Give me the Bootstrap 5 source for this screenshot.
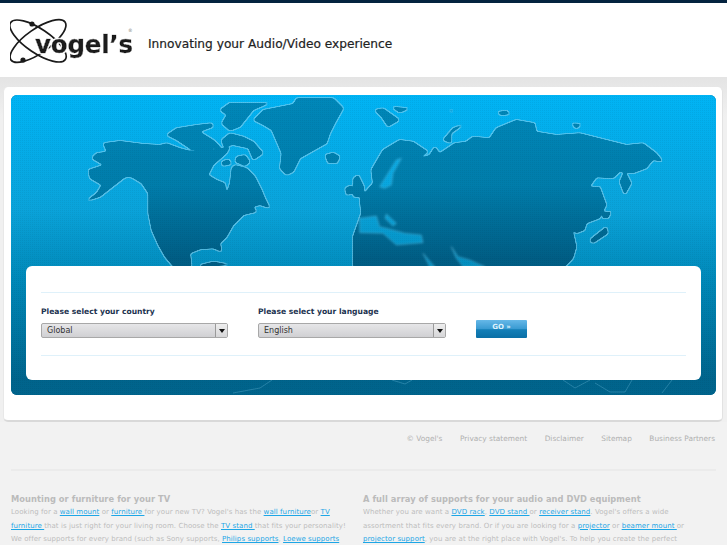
<!DOCTYPE html>
<html lang="en">
<head>
<meta charset="utf-8">
<title>Vogel's</title>
<link href="https://cdn.jsdelivr.net/npm/bootstrap@5.3.0/dist/css/bootstrap.min.css" rel="stylesheet">
<style>
html,body{height:545px;overflow:hidden;background:#f2f2f2;font-family:"DejaVu Sans",sans-serif;}
.topstrip{height:3px;background:#04233f;}
.brandbar{height:74px;background:#fff;padding-left:10px;}
.brandbar svg{display:block;margin-top:3px;}
.tagline{font-size:12.2px;color:#222;margin:9px 0 0 12px;line-height:1;-webkit-text-stroke:.2px #222;}
.band{background:linear-gradient(#e4e4e4,#f0f0f0 40px);padding:10px 4px 0 3px;}
.sheet{background:#fff;border-radius:5px;height:335px;border-bottom:2px solid #d9d9d9;border-right:1px solid #e2e2e2;border-left:1px solid #e8e8e8;padding:8px 6px 0 7px;}
.mappanel{position:relative;height:300px;border-radius:6px;overflow:hidden;background:#00648c;padding:171px 15px 15px;}
.mappanel svg{position:absolute;left:0;top:0;}
.chooser{position:relative;background:#fff;border-radius:6px;height:114px;padding:26px 15px 0;}
.chooser-rule{height:1px;background:#dff1fa;}
.chooser-row{height:62px;padding-top:13px;}
.pick{width:187px;margin-right:30px;}
.pick+.pick{width:188px;}
.pick-label{font-size:7.6px;font-weight:700;color:#1c3350;line-height:11px;margin-bottom:6px;}
.pick-box{height:15px;border:1px solid #a8a8a8;border-radius:2px;background:linear-gradient(#e6e6e8,#d0d0d3);font-size:8px;color:#333;line-height:14px;padding-left:5px;}
.pick-arrow{width:12px;height:100%;border-left:1px solid #9a9a9a;background:linear-gradient(#eee,#d6d6d8);}
.pick-arrow::before{content:"";border-left:3px solid transparent;border-right:3px solid transparent;border-top:4px solid #111;}
.gobtn{width:51px;height:18px;margin:14px 0 0 0;border-radius:1px;background:linear-gradient(#66b8e8 0,#3a9bd2 48%,#147fb8 54%,#0a6fa6 100%);color:#dff2fc;font-size:7px;font-weight:700;line-height:15px;text-align:center;}
.footlinks{padding:12px 12px 0 0;height:47px;font-size:7.4px;line-height:10px;color:#b0b0b0;gap:17.5px;}
.footrule{height:2px;background:#ebebeb;margin:0 11px;}
.seo{padding:21px 0 0 11px;gap:34px;}
.seocol{width:318px;flex:none;font-size:7px;line-height:13.6px;color:#bdbdbd;white-space:nowrap;letter-spacing:.07px;}
.seocol+.seocol{width:340px;}
.seocol h2{font-size:8.3px;font-weight:700;color:#bbb;line-height:14px;margin:0;letter-spacing:.06px;}
.seocol a{color:#1da6e6;}
</style>
</head>
<body>
<div class="topstrip"></div>
<div class="brandbar d-flex align-items-center">
<svg width="126" height="52" viewBox="10 16 126 52" role="img" aria-label="Vogel's logo">
<defs>
<filter id="halo" x="-5%" y="-20%" width="110%" height="140%">
<feMorphology in="SourceAlpha" operator="dilate" radius="1.3" result="d"/>
<feFlood flood-color="#fff"/><feComposite in2="d" operator="in" result="w"/>
<feMerge><feMergeNode in="w"/><feMergeNode in="SourceGraphic"/></feMerge>
</filter>
</defs>
<g fill="none" stroke="#1a1a1a" stroke-width="1.7">
<ellipse cx="38" cy="41" rx="33" ry="12" transform="rotate(34 38 41)"/>
<ellipse cx="38" cy="41" rx="33" ry="12" transform="rotate(-35 38 41)"/>
</g>
<circle cx="32" cy="24" r="2.6" fill="#1a1a1a"/><circle cx="23" cy="60" r="2.6" fill="#1a1a1a"/>
<text x="35" y="53" font-family="DejaVu Sans" font-weight="700" font-size="24.5" letter-spacing="-.2" fill="#1a1a1a" stroke="#1a1a1a" stroke-width=".4" filter="url(#halo)">vogel’s</text>
<text x="128" y="32" font-family="DejaVu Sans" font-size="4.5" fill="#777">®</text>
</svg>
<div class="tagline">Innovating your Audio/Video experience</div>
</div>
<div class="band">
<div class="sheet">
<div class="mappanel">
<svg width="705" height="300" viewBox="11 95 705 300" aria-hidden="true">
<defs>
<linearGradient id="sea" gradientUnits="userSpaceOnUse" x1="0" y1="95" x2="0" y2="395"><stop offset="0" stop-color="#00b4f5"/><stop offset=".38" stop-color="#0aa3da"/><stop offset=".62" stop-color="#0088b8"/><stop offset=".95" stop-color="#00648c"/></linearGradient>
<linearGradient id="seaz" gradientUnits="userSpaceOnUse" x1="0" y1="15" x2="0" y2="915"><stop offset="0" stop-color="#00b4f5"/><stop offset=".38" stop-color="#0aa3da"/><stop offset=".62" stop-color="#0088b8"/><stop offset=".95" stop-color="#00648c"/></linearGradient>
<linearGradient id="landz" gradientUnits="userSpaceOnUse" x1="0" y1="15" x2="0" y2="915"><stop offset="0" stop-color="#0088ba"/><stop offset=".3" stop-color="#007dab"/><stop offset=".55" stop-color="#005d84"/><stop offset="1" stop-color="#00648c"/></linearGradient>
<pattern id="mesh" width="2" height="2" patternUnits="userSpaceOnUse"><rect width="1" height="1" fill="#000" opacity=".05"/></pattern>
<filter id="rounded" filterUnits="userSpaceOnUse" x="11" y="95" width="705" height="300" color-interpolation-filters="sRGB">
<feGaussianBlur in="SourceGraphic" stdDeviation="1.1" result="b"/>
<feComponentTransfer in="b" result="r"><feFuncA type="linear" slope="6" intercept="-2.5"/></feComponentTransfer>
<feMorphology in="r" operator="dilate" radius=".6" result="d"/>
<feFlood flood-color="#8fd3ee" flood-opacity=".55"/>
<feComposite in2="d" operator="in" result="o"/>
<feMerge><feMergeNode in="o"/><feMergeNode in="r"/></feMerge>
</filter>
</defs>
<rect x="11" y="95" width="705" height="300" fill="url(#sea)"/>
<g filter="url(#rounded)">
<g transform="translate(0,90) scale(.33333)" fill="url(#landz)">
<path d="M310 160 360 153 430 162 480 165 500 160 540 175 580 185 610 170 640 180 665 175 690 170 680 190 640 225 625 255 650 270 675 280 680 310 690 280 695 235 705 225 740 235 765 260 785 300 795 325 810 355 780 345 760 350 770 365 730 375 700 405 680 440 660 460 665 485 640 475 600 478 570 490 575 530 520 530 495 500 475 465 455 420 445 370 445 310 425 280 395 262 375 262 345 285 300 320 255 335 290 310 305 285 270 265 265 240 310 225 275 205 290 190 320 185Z"/>
<path d="M665 150 690 130 730 140 760 155 790 190 760 210 745 175 700 165 670 170Z"/>
<path d="M710 200 735 195 750 215 735 228 705 215Z"/>
<path d="M665 215 685 208 695 222 668 228Z"/>
<path d="M500 135 530 115 590 105 635 100 640 110 600 125 640 150 665 175 620 175 575 180 530 150Z"/>
<path d="M660 60 690 38 810 38 760 60 720 110 690 122 665 100 680 75Z"/>
<path d="M790 60 880 42 890 25 1000 25 1030 55 1005 100 990 130 980 160 900 205 880 245 860 255 840 235 845 190 815 120 790 105 760 90Z"/>
<path d="M975 195 1000 188 1020 200 1010 220 985 220Z"/>
<path d="M1035 295 1055 285 1060 310 1040 315Z"/>
<path d="M1060 265 1075 255 1092 290 1092 320 1060 320Z"/>
<path d="M600 525 640 515 700 525 600 530Z"/>
</g>
<g transform="translate(363,90) scale(.33333)" fill="url(#landz)">
<path d="M-30 440-5 370-10 325 30 280 25 240 60 180 110 150 150 155 195 185 170 205 200 195 215 170 230 190 275 160 310 155 330 140 380 145 400 115 460 90 515 100 520 125 580 135 650 130 730 150 790 165 840 160 880 190 900 215 870 210 850 235 810 250 770 245 750 265 700 262 680 290 710 290 730 345 710 385 670 400 665 420 640 430 610 405 630 425 640 470 630 505 605 530-30 530Z"/>
<g fill="url(#seaz)" stroke="#8fd3ee" stroke-opacity=".5" stroke-width="2">
<path d="M50 290 100 210 115 205 90 250 85 285 65 295Z"/>
<path d="M-10 385 40 378 50 410 90 420 125 430 175 435 180 458 100 465 60 430-10 428Z"/>
<path d="M70 372 100 400 90 408 66 385Z"/>
<path d="M180 490 200 530 215 530Z"/>
<path d="M265 470 285 500 320 510 365 530 300 530 280 505Z"/>
</g>
<path d="M770 275 785 240 805 280 785 315Z"/>
<path d="M680 450 730 410 735 430 690 460Z"/>
<path d="M720 365 745 365 735 385 718 385Z"/>
<path d="M35 60 60 55 110 90 75 110 55 80Z"/>
<path d="M85 50 140 55 110 68Z"/>
<path d="M240 150 270 115 310 98 265 130 265 160Z"/>
<path d="M255 60 275 60 265 67Z"/>
<path d="M402 66 430 62 442 72 415 76Z"/>
<path d="M625 100 655 102 640 116Z"/>
</g>
</g>
<g fill="none" stroke="#7fcbe8" stroke-opacity=".3" stroke-width="1">
<path d="M233 393 260 388 272 380"/><path d="M392 380 405 384 412 380"/><path d="M563 380 575 388 590 380"/><path d="M595 383 610 392 625 392 632 380"/><path d="M662 393 672 380"/>
</g>
<rect x="11" y="95" width="705" height="300" fill="url(#mesh)"/>
</svg>
<div class="chooser">
<div class="chooser-rule"></div>
<div class="chooser-row d-flex">
<div class="pick">
<div class="pick-label">Please select your country</div>
<div class="pick-box d-flex justify-content-between align-items-center"><span>Global</span><span class="pick-arrow d-flex align-items-center justify-content-center"></span></div>
</div>
<div class="pick">
<div class="pick-label">Please select your language</div>
<div class="pick-box d-flex justify-content-between align-items-center"><span>English</span><span class="pick-arrow d-flex align-items-center justify-content-center"></span></div>
</div>
<div class="gobtn">GO »</div>
</div>
<div class="chooser-rule"></div>
</div>
</div>
</div>
</div>
<div class="footlinks d-flex justify-content-end"><span>© Vogel's</span><span>Privacy statement</span><span>Disclaimer</span><span>Sitemap</span><span>Business Partners</span></div>
<div class="footrule"></div>
<div class="seo d-flex">
<div class="seocol">
<h2>Mounting or furniture for your TV</h2>
Looking for a <a href="#">wall mount</a> or <a href="#">furniture </a> for your new TV? Vogel's has the <a href="#">wall furniture</a>or <a href="#">TV</a><br>
<a href="#">furniture </a> that is just right for your living room. Choose the <a href="#">TV stand </a> that fits your personality!<br>
We offer supports for every brand (such as Sony supports, <a href="#">Philips supports</a>, <a href="#">Loewe supports</a>
</div>
<div class="seocol">
<h2>A full array of supports for your audio and DVD equipment</h2>
Whether you are want a <a href="#">DVD rack</a>, <a href="#">DVD stand </a> or <a href="#">receiver stand</a>. Vogel's offers a wide<br>
assortment that fits every brand. Or if you are looking for a <a href="#">projector</a> or <a href="#">beamer mount </a> or<br>
<a href="#">projector support</a>, you are at the right place with Vogel's. To help you create the perfect
</div>
</div>
<script src="https://cdn.jsdelivr.net/npm/bootstrap@5.3.0/dist/js/bootstrap.bundle.min.js"></script>
</body>
</html>
